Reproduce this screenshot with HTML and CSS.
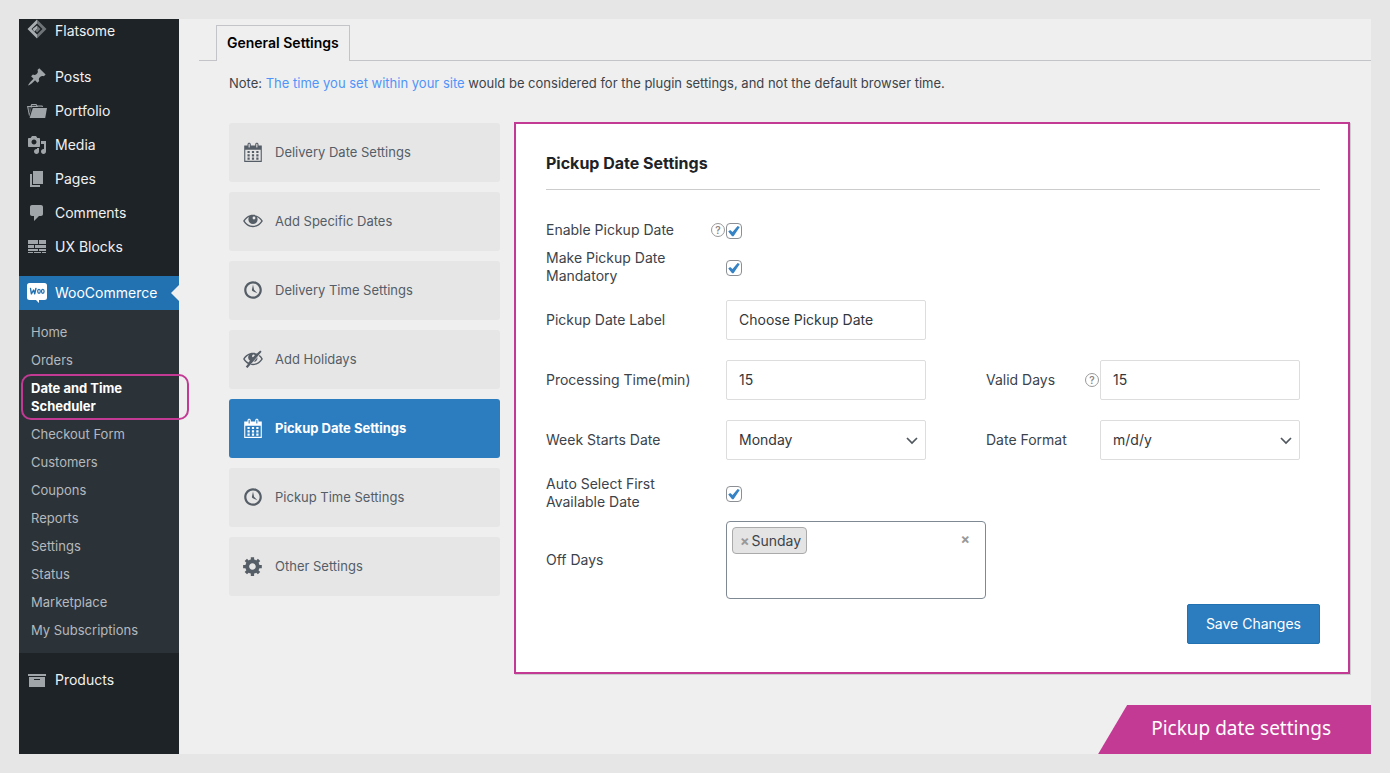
FILE: index.html
```html
<!DOCTYPE html>
<html lang="en">
<head>
<meta charset="utf-8">
<meta name="viewport" content="width=device-width, initial-scale=1">
<title>Pickup Date Settings</title>
<link rel="stylesheet" href="styles.css">
</head>
<body>
<svg class="defs" aria-hidden="true">
  <symbol id="i-calendar" viewBox="0 0 20 20"><path fill-rule="evenodd" d="M15 4h3v15H2V4h3V3c0-.41.15-.76.44-1.06.29-.29.65-.44 1.06-.44s.77.15 1.06.44c.29.3.44.65.44 1.06v1h4V3c0-.41.15-.76.44-1.06.29-.29.65-.44 1.06-.44s.77.15 1.06.44c.29.3.44.65.44 1.06v1zM6 3v2.5c0 .14.05.26.15.36.09.09.21.14.35.14s.26-.05.35-.14c.1-.1.15-.22.15-.36V3c0-.14-.05-.26-.15-.35-.09-.1-.21-.15-.35-.15s-.26.05-.35.15c-.1.09-.15.21-.15.35zm7 0v2.5c0 .14.05.26.14.36.1.09.22.14.36.14s.26-.05.36-.14c.09-.1.14-.22.14-.36V3c0-.14-.05-.26-.14-.35-.1-.1-.22-.15-.36-.15s-.26.05-.36.15c-.09.09-.14.21-.14.35zm4 15V8H3v10h14zM7 9v2H5V9h2zm2 0h2v2H9V9zm4 2V9h2v2h-2zm-6 1v2H5v-2h2zm2 0h2v2H9v-2zm4 2v-2h2v2h-2zm-6 1v2H5v-2h2zm4 2H9v-2h2v2zm4 0h-2v-2h2v2z"/></symbol>
  <symbol id="i-clock" viewBox="0 0 20 20"><path fill-rule="evenodd" d="M10 2c4.42 0 8 3.58 8 8s-3.58 8-8 8-8-3.58-8-8 3.58-8 8-8zm0 14c3.31 0 6-2.69 6-6s-2.69-6-6-6-6 2.69-6 6 2.69 6 6 6z"/><path d="M9.29 10.71c.07.05.14.1.23.15l-.02.02L14 13l-3.03-3.19L10 5l-.97 4.81c0 .02 0 .05-.01.09s-.02.07-.02.1c0 .28.1.52.29.71z"/></symbol>
  <symbol id="i-eye" viewBox="0 0 20 20"><path fill-rule="evenodd" d="M10 4.400c4 0 7 2.400 9 5.600-2 3.200-5 5.600-9 5.600S3 13.200 1 10c2-3.200 5-5.600 9-5.600zM6.400 6.300C4.800 7.200 3.500 8.400 2.500 10c1.700 2.600 4.300 4.400 7.500 4.400s5.800-1.800 7.500-4.400c-1-1.600-2.300-2.800-3.900-3.700.4.700.6 1.500.6 2.300a4.200 4.200 0 0 1-8.400 0c0-.8.200-1.600.6-2.300zM10.900 6a1.300 1.300 0 1 0 0 2.600 1.300 1.300 0 0 0 0-2.600z"/></symbol>
  <symbol id="i-hidden" viewBox="0 0 20 20"><path fill-rule="evenodd" d="M16.600 2.300l1.200 1L5 18.200 3.400 17l2-2.500C3.500 13.500 2 11.900 1 10c2.100-3.400 5.200-5.600 9-5.600 1.300 0 2.500.2 3.600.7zM6.400 6.300C4.800 7.200 3.500 8.400 2.500 10c.9 1.300 2 2.400 3.400 3.200l1.300-1.500a4.100 4.100 0 0 1-.8-5.400zM10.500 6a1.300 1.300 0 0 0-.5 2.500l1.700-2A1.300 1.300 0 0 0 10.500 6z"/><path d="M16.100 6.300c1.200 1 2.200 2.300 2.900 3.700-2 3.400-5.200 5.600-9 5.600-.8 0-1.500-.1-2.200-.3l.9-1c3.800.4 6.800-1.400 8.800-4.300-.6-1-1.400-2-2.300-2.700z"/><path d="M14.100 8.500a4.200 4.200 0 0 1-3.700 4.200z"/></symbol>
  <symbol id="i-gear" viewBox="0 0 20 20"><path fill-rule="evenodd" d="M18 12h-2.180c-.17.7-.44 1.350-.81 1.930l1.540 1.540-2.100 2.100-1.540-1.540c-.58.36-1.230.63-1.910.79V19H8v-2.180c-.68-.16-1.330-.43-1.910-.79l-1.540 1.540-2.120-2.120 1.540-1.540c-.36-.58-.63-1.230-.79-1.910H1V9.030h2.170c.16-.7.44-1.350.8-1.940L2.430 5.550l2.100-2.100 1.540 1.540c.58-.37 1.240-.64 1.930-.81V2h3v2.180c.68.16 1.330.43 1.910.79l1.540-1.540 2.120 2.120-1.540 1.540c.36.59.64 1.240.8 1.940H18V12zm-8.500 1.500c1.660 0 3-1.340 3-3s-1.340-3-3-3-3 1.340-3 3 1.340 3 3 3z"/></symbol>
</svg>

<div class="frame">
  <nav class="sidebar" aria-label="Admin menu">
    <ul class="menu">
      <li><a class="menu-link menu-link-first" href="#">
        <svg class="menu-icon" viewBox="0 0 20 20" aria-hidden="true"><path fill="#6f7478" d="M10 .5l9.500 9.500-9.500 9.500V15.500l5.500-5.500L10 4.500z"/><path fill="#a8adb1" d="M10 .5V4.500L4.500 10l5.500 5.500v4L.5 10z"/><path fill="#a8adb1" d="M10 6.500V10l-2.800 2.800L5.500 10z"/><path fill="#6f7478" d="M10 6.500l3.500 3.500-3.500 3.500-1.700-1.700L10 10z"/></svg>
        <span>Flatsome</span></a></li>
      <li class="separated"><a class="menu-link" href="#">
        <svg class="menu-icon" viewBox="0 0 20 20" aria-hidden="true"><path d="M10.440 3.020l1.820-1.820 6.360 6.350-1.830 1.820c-1.050-.68-2.480-.57-3.410.36l-.75.75c-.92.93-1.040 2.350-.35 3.410l-1.830 1.820-2.410-2.410-2.800 2.790c-.42.42-3.380 2.710-3.800 2.290s1.860-3.390 2.280-3.810l2.790-2.790L4.100 9.360l1.830-1.820c1.050.69 2.480.57 3.400-.36l.75-.75c.93-.92 1.050-2.350.36-3.410z"/></svg>
        <span>Posts</span></a></li>
      <li><a class="menu-link" href="#">
        <svg class="menu-icon" viewBox="0 0 20 20" aria-hidden="true"><path d="M0 5h3.500l.6-1.500c.2-.4.500-.5.900-.5h4c.4 0 .7.200.9.600l.3.900H15c.3 0 .5.100.6.400l.5 1.100H5.500c-.6 0-1 .3-1.200.9L2.200 15.800z"/><path d="M5.800 7H20l-1.800 10H2.600z"/><path fill="#1d2327" d="M5 4h4l.3 1H4.700zM10.800 5.500h4v.7h-4zM1.200 6h3.300l-2 7z" opacity=".75"/></svg>
        <span>Portfolio</span></a></li>
      <li><a class="menu-link" href="#">
        <svg class="menu-icon" viewBox="0 0 20 20" aria-hidden="true"><path fill-rule="evenodd" d="M13 11V4c0-.55-.45-1-1-1h-1.670L9 1H5L3.670 3H2c-.55 0-1 .45-1 1v7c0 .55.45 1 1 1h10c.55 0 1-.45 1-1zM7 4.500c1.380 0 2.500 1.120 2.500 2.500S8.380 9.500 7 9.500 4.500 8.380 4.500 7 5.620 4.500 7 4.500zM14 6h5v10.500c0 1.380-1.120 2.500-2.500 2.500S14 17.880 14 16.500s1.120-2.500 2.500-2.500c.17 0 .34.020.5.050V9h-3V6zm-4 8.050V13h2v3.500c0 1.380-1.120 2.500-2.500 2.500S7 17.880 7 16.500 8.120 14 9.500 14c.17 0 .34.020.5.050z"/></svg>
        <span>Media</span></a></li>
      <li><a class="menu-link" href="#">
        <svg class="menu-icon" viewBox="0 0 20 20" aria-hidden="true"><path d="M6 15V2h10v13H6zm-1 1h8v2H3V5h2v11z"/></svg>
        <span>Pages</span></a></li>
      <li><a class="menu-link" href="#">
        <svg class="menu-icon" viewBox="0 0 20 20" aria-hidden="true"><path d="M5 2h9c1.100 0 2 .9 2 2v7c0 1.100-.9 2-2 2h-2l-5 5v-5H5c-1.100 0-2-.9-2-2V4c0-1.100.9-2 2-2z"/></svg>
        <span>Comments</span></a></li>
      <li><a class="menu-link" href="#">
        <svg class="menu-icon" viewBox="0 0 20 20" aria-hidden="true"><path d="M1 3h10v4H1zM12 3h7v4h-7zM1 8h6v3H1zM8 8h11v3H8zM1 12h10v2H1zM12 12h7v2h-7zM1 15h5v1H1zM7 15h7v1H7zM15 15h4v1h-4z"/></svg>
        <span>UX Blocks</span></a></li>
      <li class="separated"><a class="menu-link menu-link-current" href="#">
        <svg class="menu-icon" viewBox="0 0 20 20" aria-hidden="true"><path fill="#fff" d="M2.500 0h15A2.500 2.500 0 0 1 20 2.500v12a2.500 2.500 0 0 1-2.500 2.500H12v3l-3-3H2.500A2.500 2.500 0 0 1 0 14.500v-12A2.500 2.500 0 0 1 2.500 0z"/><path fill="none" stroke="#2271b1" stroke-width="1.400" stroke-linejoin="round" stroke-linecap="round" d="M3.500 5.500l.9 5.300L6.600 7l1.100 3.800L8.900 5.500"/><ellipse cx="12" cy="8.300" rx="1.300" ry="2" fill="none" stroke="#2271b1" stroke-width="1.200"/><ellipse cx="15.800" cy="8.300" rx="1.300" ry="2" fill="none" stroke="#2271b1" stroke-width="1.200"/></svg>
        <span>WooCommerce</span></a>
        <ul class="submenu">
          <li><a class="submenu-link" href="#">Home</a></li>
          <li><a class="submenu-link" href="#">Orders</a></li>
          <li><a class="submenu-link submenu-link-current" href="#" aria-current="page">Date and Time Scheduler</a></li>
          <li><a class="submenu-link" href="#">Checkout Form</a></li>
          <li><a class="submenu-link" href="#">Customers</a></li>
          <li><a class="submenu-link" href="#">Coupons</a></li>
          <li><a class="submenu-link" href="#">Reports</a></li>
          <li><a class="submenu-link" href="#">Settings</a></li>
          <li><a class="submenu-link" href="#">Status</a></li>
          <li><a class="submenu-link" href="#">Marketplace</a></li>
          <li><a class="submenu-link" href="#">My Subscriptions</a></li>
        </ul>
      </li>
      <li class="after-submenu"><a class="menu-link" href="#">
        <svg class="menu-icon" viewBox="0 0 20 20" aria-hidden="true"><path fill-rule="evenodd" d="M1 4h18v2H1zM2 7h16v10H2zM7 9v1h6V9z"/></svg>
        <span>Products</span></a></li>
    </ul>
  </nav>

  <main class="main">
    <div class="tabs"><a class="tab" href="#">General Settings</a></div>
    <p class="note">Note: <a class="note-link" href="#">The time you set within your site</a> would be considered for the plugin settings, and not the default browser time.</p>

    <div class="content">
      <nav class="sections" aria-label="Settings sections">
        <a class="section" href="#"><svg class="section-icon" aria-hidden="true"><use href="#i-calendar"/></svg>Delivery Date Settings</a>
        <a class="section" href="#"><svg class="section-icon" aria-hidden="true"><use href="#i-eye"/></svg>Add Specific Dates</a>
        <a class="section" href="#"><svg class="section-icon" aria-hidden="true"><use href="#i-clock"/></svg>Delivery Time Settings</a>
        <a class="section" href="#"><svg class="section-icon" aria-hidden="true"><use href="#i-hidden"/></svg>Add Holidays</a>
        <a class="section section-current" href="#" aria-current="page"><svg class="section-icon" aria-hidden="true"><use href="#i-calendar"/></svg>Pickup Date Settings</a>
        <a class="section" href="#"><svg class="section-icon" aria-hidden="true"><use href="#i-clock"/></svg>Pickup Time Settings</a>
        <a class="section" href="#"><svg class="section-icon" aria-hidden="true"><use href="#i-gear"/></svg>Other Settings</a>
      </nav>

      <form class="panel">
        <h1 class="panel-title">Pickup Date Settings</h1>
        <div class="rows">
          <div class="row">
            <div class="label-cell"><label for="enable">Enable Pickup Date</label><span class="help">?</span></div>
            <input class="checkbox" type="checkbox" id="enable" checked>
          </div>
          <div class="row">
            <div class="label-cell"><label class="label-narrow" for="mandatory">Make Pickup Date Mandatory</label></div>
            <input class="checkbox" type="checkbox" id="mandatory" checked>
          </div>
          <div class="row row-field">
            <div class="label-cell"><label for="label">Pickup Date Label</label></div>
            <input class="field" type="text" id="label" value="Choose Pickup Date">
          </div>
          <div class="row row-field">
            <div class="label-cell"><label for="processing">Processing Time(min)</label></div>
            <input class="field" type="text" id="processing" value="15">
            <div class="label-cell label-cell-second"><label for="valid">Valid Days</label><span class="help">?</span></div>
            <input class="field" type="text" id="valid" value="15">
          </div>
          <div class="row row-field">
            <div class="label-cell"><label for="week">Week Starts Date</label></div>
            <div class="select-wrap">
              <select class="field" id="week"><option>Monday</option></select>
              <svg class="chevron" viewBox="0 0 12 12" aria-hidden="true"><path d="M1 4l5 5 5-5"/></svg>
            </div>
            <div class="label-cell label-cell-second"><label for="format">Date Format</label></div>
            <div class="select-wrap">
              <select class="field" id="format"><option>m/d/y</option></select>
              <svg class="chevron" viewBox="0 0 12 12" aria-hidden="true"><path d="M1 4l5 5 5-5"/></svg>
            </div>
          </div>
          <div class="row">
            <div class="label-cell"><label class="label-narrow" for="auto">Auto Select First Available Date</label></div>
            <input class="checkbox" type="checkbox" id="auto" checked>
          </div>
          <div class="row">
            <div class="label-cell"><span id="off-label">Off Days</span></div>
            <div class="multi" role="group" aria-labelledby="off-label">
              <span class="tag"><button class="cross" type="button" aria-label="Remove Sunday">×</button>Sunday</span>
              <button class="cross cross-clear" type="button" aria-label="Clear all">×</button>
            </div>
          </div>
        </div>
        <div class="actions"><button class="save" type="submit">Save Changes</button></div>
      </form>
    </div>

    <div class="banner">Pickup date settings</div>
  </main>
</div>
</body>
</html>
```
FILE: styles.css
```css
* {
  box-sizing: border-box;
}

body {
  margin: 0;
  padding: 19px;
  background: #e6e6e6;
  color: #3c434a;
  font-family: Inter, "Liberation Sans", sans-serif;
  font-size: 13px;
  line-height: 18px;
}

a {
  color: inherit;
  text-decoration: none;
}

ul {
  margin: 0;
  padding: 0;
  list-style: none;
}

.defs {
  position: absolute;
  width: 0;
  height: 0;
}

.frame {
  display: grid;
  grid-template-columns: 160px minmax(0, 1fr);
  min-height: calc(100vh - 38px);
  background: #efefef;
}

/* Admin menu */

.sidebar {
  background: #1d2327;
}

.menu-link {
  position: relative;
  display: flex;
  align-items: center;
  gap: 8px;
  height: 34px;
  padding-left: 8px;
  color: #f0f0f1;
  font-size: 14px;
}

.menu-link-first {
  align-items: flex-start;
  height: 29px;
  line-height: 24px;
}

.menu-icon {
  flex: none;
  width: 20px;
  height: 20px;
  fill: #a0a5aa;
}

.separated {
  margin-top: 12px;
}

.after-submenu {
  margin-top: 10px;
}

.menu-link-current {
  background: #2271b1;
  color: #fff;
}

.menu-link-current::after {
  content: "";
  position: absolute;
  top: 9px;
  right: 0;
  border: 8px solid transparent;
  border-left-width: 0;
  border-right-color: #efefef;
}

.submenu {
  padding: 8px 0 9px;
  background: #2c3338;
}

.submenu-link {
  position: relative;
  display: block;
  padding: 5px 12px;
  color: #b4b9be;
}

.submenu-link-current {
  color: #fff;
  font-weight: 700;
}

.submenu-link-current::after {
  content: "";
  position: absolute;
  inset: 0 -10px 0 2px;
  border: 2px solid #c33a94;
  border-radius: 10px;
}

/* Main column */

.main {
  display: flex;
  flex-direction: column;
}

.tabs {
  display: flex;
  margin-left: 20px;
  padding: 6px 17px 0;
  box-shadow: inset 0 -1px #c3c4c7;
}

.tab {
  padding: 8px 10px 9px;
  border: 1px solid #c3c4c7;
  border-bottom: 0;
  background: #efefef;
  color: #000;
  font-size: 14px;
  font-weight: 600;
}

.note {
  margin: 13px 50px 0;
}

.note-link {
  color: #4f94f8;
}

.content {
  display: grid;
  grid-template-columns: 271px minmax(0, 1fr);
  gap: 14px;
  margin: 30px 21px 0 50px;
}

.sections {
  display: flex;
  flex-direction: column;
  gap: 10px;
  padding-top: 1px;
}

.section {
  display: flex;
  align-items: center;
  gap: 11px;
  height: 59px;
  padding: 0 13px 1px;
  border-radius: 3px;
  background: #e6e6e6;
  color: #555d66;
}

.section-current {
  background: #2b7dbf;
  color: #fff;
  font-weight: 700;
}

.section-icon {
  flex: none;
  width: 22px;
  height: 22px;
  fill: currentColor;
}

.panel {
  padding: 28px 28px 28px 30px;
  border: 2px solid #c33a94;
  background: #fff;
  box-shadow: 1px 1px #ccc;
  font-size: 14px;
}

.panel-title {
  margin: 0 0 31px;
  padding-bottom: 14px;
  border-bottom: 1px solid #ccc;
  color: #1d2327;
  font-size: 16px;
  font-weight: 700;
  line-height: 23px;
}

.rows {
  display: flex;
  flex-direction: column;
  gap: 10px;
}

.row {
  display: flex;
  align-items: center;
}

.row-field {
  padding: 5px 0;
}

.label-cell {
  display: flex;
  flex: none;
  align-items: center;
  justify-content: space-between;
  width: 180px;
  padding-right: 1px;
}

.label-cell-second {
  width: 114px;
  margin-left: 60px;
}

.label-narrow {
  width: 130px;
}

.help {
  width: 14px;
  height: 14px;
  border: 1px solid #999;
  border-radius: 50%;
  color: #888;
  font-size: 10px;
  font-weight: 600;
  line-height: 12px;
  text-align: center;
}

.checkbox {
  display: grid;
  place-items: center;
  width: 16px;
  height: 16px;
  margin: 2px 0 0;
  border: 1px solid #8c8f94;
  border-radius: 4px;
  background: #fff;
  appearance: none;
}

.checkbox:checked::before {
  content: "";
  width: 12px;
  height: 11px;
  background: #3582c4;
  clip-path: polygon(2% 54%, 18% 40%, 38% 60%, 80% 4%, 98% 14%, 46% 98%, 34% 98%);
}

.field {
  width: 200px;
  height: 40px;
  padding: 0 12px 1px;
  border: 1px solid #ddd;
  border-radius: 2px;
  background: #fff;
  color: #32373c;
  font: inherit;
  appearance: none;
}

.select-wrap {
  position: relative;
}

.chevron {
  position: absolute;
  top: 14px;
  right: 8px;
  width: 12px;
  height: 12px;
  fill: none;
  stroke: #50575e;
  stroke-width: 1.7;
  pointer-events: none;
}

.multi {
  display: flex;
  align-items: flex-start;
  justify-content: space-between;
  width: 260px;
  height: 78px;
  padding: 5px;
  border: 1px solid #7e8993;
  border-radius: 4px;
}

.tag {
  display: flex;
  align-items: center;
  gap: 1px;
  height: 27px;
  padding: 0 5px 0 6px;
  border: 1px solid #aaa;
  border-radius: 4px;
  background: #e4e4e4;
}

.cross {
  padding: 0 1px;
  border: 0;
  background: none;
  color: #999;
  font: inherit;
  font-weight: 700;
}

.cross-clear {
  margin: 3px 9px 0 0;
}

.actions {
  display: flex;
  justify-content: flex-end;
  margin-top: 5px;
}

.save {
  height: 40px;
  padding: 0 18px;
  border: 1px solid #2271b1;
  border-radius: 2px;
  background: #2b7dbf;
  color: #fff;
  font: inherit;
}

.banner {
  align-self: flex-end;
  margin-top: auto;
  padding: 0 40px 2px 53px;
  background: #c33a94;
  clip-path: polygon(29px 0, 100% 0, 100% 100%, 0 100%);
  color: #fff;
  font-family: "Noto Sans", "Open Sans", sans-serif;
  font-size: 19px;
  line-height: 47px;
}
```
